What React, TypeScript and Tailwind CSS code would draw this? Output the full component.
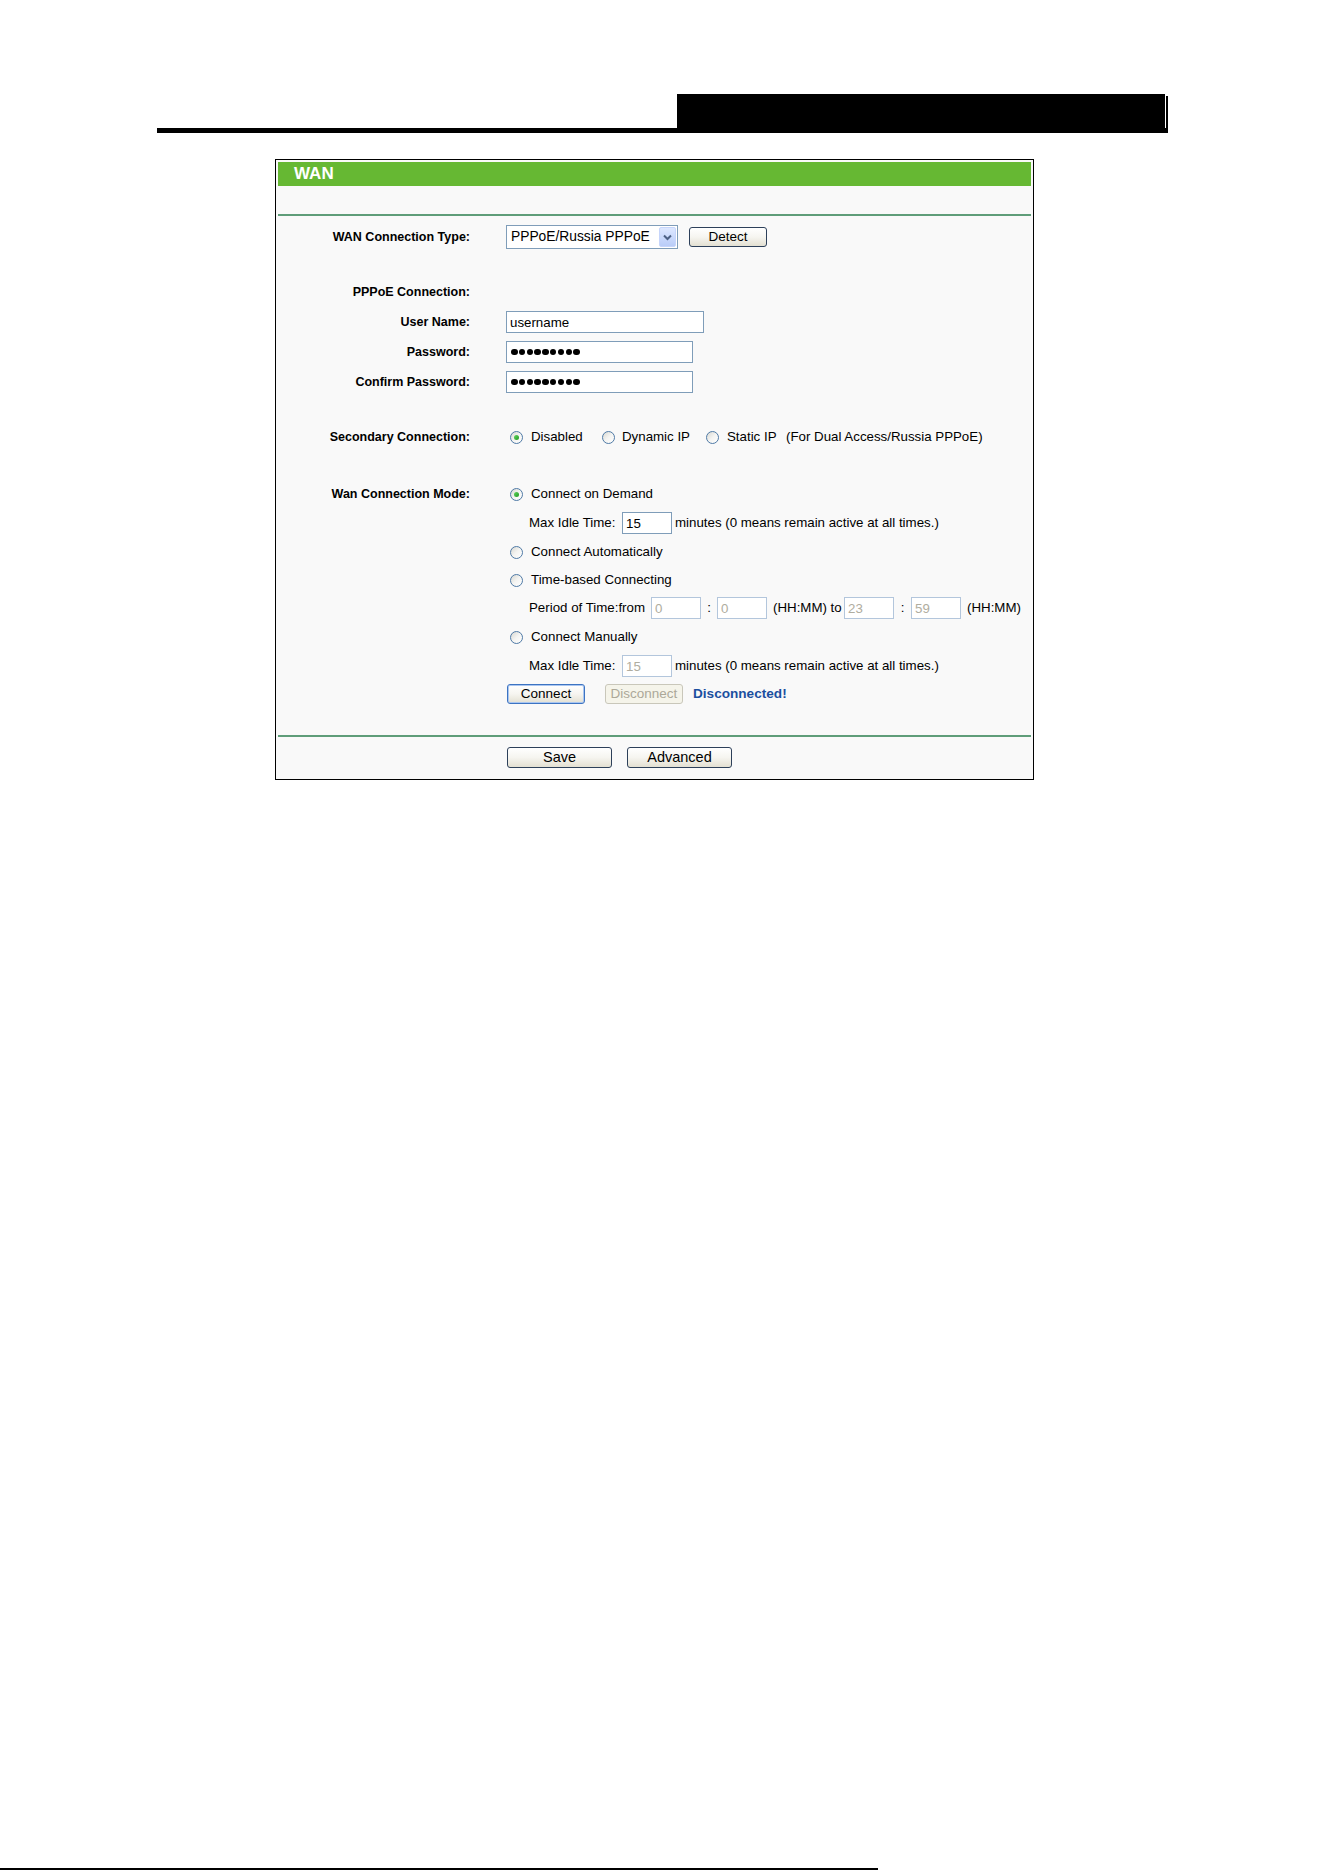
import React from "react";

type RowProps = {
  label?: string;
  className: string;
  labelClass?: string;
  children?: React.ReactNode;
};

// One form row: bold right-aligned caption on the left, controls on the right.
function Row({ label, className, labelClass, children }: RowProps) {
  return (
    <div className={"flex " + className}>
      <div
        className={
          "flex w-[192px] shrink-0 items-center justify-end text-[12.5px] font-bold " +
          (labelClass ?? "h-full")
        }
      >
        {label}
      </div>
      <div className="ml-[36px] flex flex-col">{children}</div>
    </div>
  );
}

function Radio({ checked }: { checked?: boolean }) {
  return (
    <span className="relative flex h-[13px] w-[13px] shrink-0 items-center justify-center rounded-full border border-[#4f7aa6] bg-gradient-to-br from-[#d8d8d2] via-[#f4f4f2] to-white">
      {checked && (
        <span className="h-[5px] w-[5px] rounded-full bg-gradient-to-br from-[#5fd35f] to-[#1f9a1f]" />
      )}
    </span>
  );
}

function Field({
  value,
  className,
  disabled,
}: {
  value: string;
  className: string;
  disabled?: boolean;
}) {
  return (
    <input
      readOnly
      value={value}
      disabled={disabled}
      className={
        "h-[22px] border bg-white px-[3px] text-[13.3px] outline-none " +
        (disabled
          ? "border-[#b3c6dc] text-[#b0ada0] "
          : "border-[#7f9db9] text-black ") +
        className
      }
    />
  );
}

function Dots() {
  return (
    <div className="flex h-[22px] w-[187px] items-center gap-[1.3px] border border-[#7f9db9] bg-white pl-[4px]">
      {Array.from({ length: 9 }).map((_, i) => (
        <span key={i} className="h-[6.5px] w-[6.5px] rounded-full bg-black" />
      ))}
    </div>
  );
}

const btn =
  "flex items-center justify-center rounded-[3px] border bg-gradient-to-b from-white via-[#f6f5f0] to-[#e3e0d2] text-black";

export default function App() {
  return (
    <div className="flex min-h-[1872px] w-[1324px] flex-col bg-white font-['Liberation_Sans',Arial,sans-serif] text-black">
      {/* page header rule */}
      <div className="pl-[157px] pt-[94px]">
        <div className="flex w-[1011px] items-end border-b-[5px] border-black">
          <div className="w-[520px]" />
          <div className="h-[34px] w-[488px] bg-black" />
          <div className="ml-[1px] h-[32px] w-[2px] bg-black" />
        </div>
      </div>

      {/* WAN settings panel */}
      <div className="ml-[275px] mt-[26px] w-[759px] border border-black bg-[#f9f9f9] p-[2px] pb-[11px]">
        <div className="flex h-[24px] items-center bg-[#66b833] pl-[16px] text-[17px] font-bold text-white">
          WAN
        </div>
        <div className="mt-[28px] h-[2px] bg-[#5f9d79]" />

        <Row label="WAN Connection Type:" className="mt-[9px] h-[24px]">
          <div className="flex h-[24px] items-center">
            <div className="flex h-[24px] w-[172px] items-center border border-[#7f9db9] bg-white">
              <span className="flex-1 pl-[4px] text-[13.8px]">PPPoE/Russia PPPoE</span>
              <span className="mr-[1px] flex h-[20px] w-[17px] items-center justify-center rounded-[2px] border border-[#c6d5fb] bg-gradient-to-b from-[#dde7ff] to-[#b9ccf8]">
                <svg width="9" height="7" viewBox="0 0 9 7">
                  <path d="M1 1.5 L4.5 5 L8 1.5" fill="none" stroke="#4d6185" strokeWidth="2" />
                </svg>
              </span>
            </div>
            <button className={btn + " ml-[11px] h-[20px] w-[78px] border-[#2d405a] text-[13.5px]"}>
              Detect
            </button>
          </div>
        </Row>

        <Row label="PPPoE Connection:" className="mt-[33px] h-[20px]" />

        <Row label="User Name:" className="mt-[9px] h-[22px]">
          <Field value="username" className="w-[198px]" />
        </Row>
        <Row label="Password:" className="mt-[8px] h-[22px]">
          <Dots />
        </Row>
        <Row label="Confirm Password:" className="mt-[8px] h-[22px]">
          <Dots />
        </Row>

        <Row label="Secondary Connection:" className="mt-[34px] h-[20px]">
          <div className="flex h-[20px] items-center text-[13.3px]">
            <span className="flex w-[96px] items-center gap-[8px] pl-[4px]">
              <Radio checked />
              Disabled
            </span>
            <span className="flex w-[104px] items-center gap-[7px]">
              <Radio />
              Dynamic IP
            </span>
            <span className="flex w-[80px] items-center gap-[8px]">
              <Radio />
              Static IP
            </span>
            <span>(For Dual Access/Russia PPPoE)</span>
          </div>
        </Row>

        <Row label="Wan Connection Mode:" className="mt-[37px]" labelClass="h-[20px]">
          <div className="flex h-[20px] items-center gap-[8px] pl-[4px] text-[13.3px]">
            <Radio checked />
            Connect on Demand
          </div>
          <div className="mt-[8px] flex h-[22px] items-center text-[13.3px]">
            <span className="w-[116px] pl-[23px]">Max Idle Time:</span>
            <Field value="15" className="w-[50px]" />
            <span className="ml-[3px]">minutes (0 means remain active at all times.)</span>
          </div>
          <div className="mt-[8px] flex h-[20px] items-center gap-[8px] pl-[4px] text-[13.3px]">
            <Radio />
            Connect Automatically
          </div>
          <div className="mt-[8px] flex h-[20px] items-center gap-[8px] pl-[4px] text-[13.3px]">
            <Radio />
            Time-based Connecting
          </div>
          <div className="mt-[7px] flex h-[22px] items-center text-[13.3px]">
            <span className="w-[145px] whitespace-nowrap pl-[23px]">Period of Time:from</span>
            <Field value="0" disabled className="w-[50px]" />
            <span className="w-[16px] text-center">:</span>
            <Field value="0" disabled className="w-[50px]" />
            <span className="w-[77px] whitespace-nowrap pl-[6px]">(HH:MM) to</span>
            <Field value="23" disabled className="w-[50px]" />
            <span className="w-[17px] text-center">:</span>
            <Field value="59" disabled className="w-[50px]" />
            <span className="whitespace-nowrap pl-[6px]">(HH:MM)</span>
          </div>
          <div className="mt-[8px] flex h-[20px] items-center gap-[8px] pl-[4px] text-[13.3px]">
            <Radio />
            Connect Manually
          </div>
          <div className="mt-[8px] flex h-[22px] items-center text-[13.3px]">
            <span className="w-[116px] pl-[23px]">Max Idle Time:</span>
            <Field value="15" disabled className="w-[50px]" />
            <span className="ml-[3px]">minutes (0 means remain active at all times.)</span>
          </div>
          <div className="mt-[7px] flex h-[20px] items-center">
            <button className={btn + " ml-[1px] h-[20px] w-[78px] border-[#3d74c2] text-[13.5px] shadow-[inset_0_0_0_1px_#aac6f0]"}>
              Connect
            </button>
            <button
              disabled
              className="ml-[20px] flex h-[20px] w-[78px] items-center justify-center rounded-[3px] border border-[#c9c7ba] bg-[#f5f4ea] text-[13.5px] text-[#aca899]"
            >
              Disconnect
            </button>
            <span className="ml-[10px] text-[13.6px] font-bold text-[#1c4f9f]">Disconnected!</span>
          </div>
        </Row>

        <div className="mt-[31px] h-[2px] bg-[#5f9d79]" />

        <div className="mt-[10px] flex h-[21px] pl-[229px]">
          <button className={btn + " h-[21px] w-[105px] border-[#2d405a] text-[14.5px]"}>Save</button>
          <button className={btn + " ml-[15px] h-[21px] w-[105px] border-[#2d405a] text-[14.5px]"}>
            Advanced
          </button>
        </div>
      </div>

      {/* page footer rule */}
      <div className="mb-[2px] mt-auto h-[2px] w-[878px] bg-black" />
    </div>
  );
}
